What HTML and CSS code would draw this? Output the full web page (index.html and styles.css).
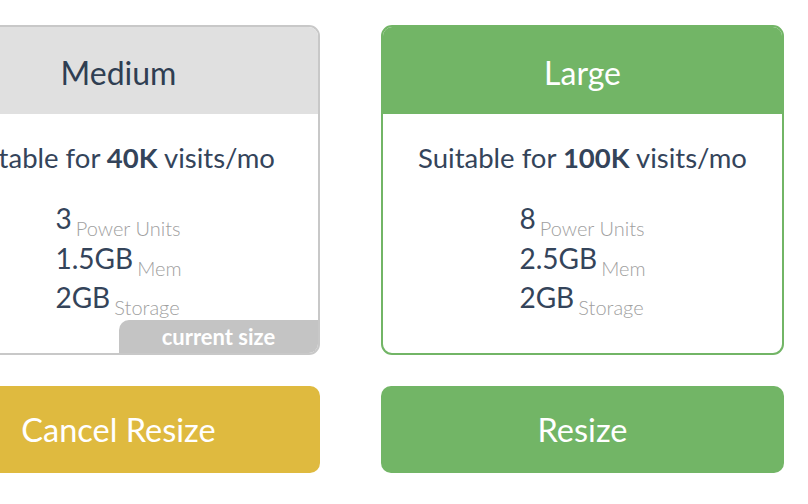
FILE: index.html
```html
<!DOCTYPE html>
<html>
<head>
<meta charset="utf-8">
<link rel="stylesheet" href="styles.css">
</head>
<body>
<div class="plans">
  <div class="col">
    <div class="card card-current">
      <div class="card-head">Medium</div>
      <div class="card-body">
        <p class="suit">Suitable for <b>40K</b> visits/mo</p>
        <div class="specs">
          <div class="spec"><span class="num">3</span> <span class="unit">Power Units</span></div>
          <div class="spec"><span class="num">1.5GB</span> <span class="unit">Mem</span></div>
          <div class="spec"><span class="num">2GB</span> <span class="unit">Storage</span></div>
        </div>
        <div class="badge">current size</div>
      </div>
    </div>
    <button class="btn btn-cancel">Cancel Resize</button>
  </div>
  <div class="col">
    <div class="card card-selected">
      <div class="card-head">Large</div>
      <div class="card-body">
        <p class="suit">Suitable for <b>100K</b> visits/mo</p>
        <div class="specs">
          <div class="spec"><span class="num">8</span> <span class="unit">Power Units</span></div>
          <div class="spec"><span class="num">2.5GB</span> <span class="unit">Mem</span></div>
          <div class="spec"><span class="num">2GB</span> <span class="unit">Storage</span></div>
        </div>
      </div>
    </div>
    <button class="btn btn-resize">Resize</button>
  </div>
</div>
</body>
</html>
```

FILE: styles.css
```css
* { box-sizing: border-box; }
html, body {
  margin: 0;
  padding: 0;
  background: #ffffff;
  overflow: hidden;
}
body {
  font-family: Lato, "Open Sans", sans-serif;
  color: #34445a;
  width: 808px;
  height: 504px;
}
.plans {
  display: flex;
  gap: 61px;
  margin-left: -83px;
  padding-top: 25px;
}
.col {
  width: 403px;
  flex: none;
  display: flex;
  flex-direction: column;
  gap: 31px;
}
.card {
  position: relative;
  height: 330px;
  border: 2px solid #c8c8c8;
  border-radius: 11px;
  overflow: hidden;
  display: flex;
  flex-direction: column;
}
.card-selected { border-color: #72b566; }
.card-head {
  height: 87px;
  display: flex;
  align-items: center;
  justify-content: center;
  font-size: 32px;
  background: #e0e0e0;
  color: #2f3e52;
  padding-top: 4px;
}
.card-selected .card-head {
  background: #72b566;
  color: #ffffff;
}
.card-body {
  flex: 1;
  display: flex;
  flex-direction: column;
  align-items: center;
  padding-top: 27px;
}
.suit {
  margin: 0;
  font-size: 27.5px;
  line-height: 33px;
  white-space: nowrap;
}
.suit b { font-weight: 700; }
.specs {
  margin-top: 25px;
}
.spec {
  height: 39.5px;
  line-height: 39.5px;
  white-space: nowrap;
}
.num {
  font-size: 28px;
}
.unit {
  font-size: 20px;
  font-weight: 300;
  color: #a0a0a0;
  vertical-align: -7px;
}
.badge {
  position: absolute;
  right: 0;
  bottom: 0;
  width: 199px;
  height: 33px;
  background: #c4c4c4;
  border-top-left-radius: 10px;
  color: #ffffff;
  font-weight: 700;
  font-size: 22px;
  line-height: 33px;
  text-align: center;
}
.btn {
  height: 87px;
  border: 0;
  border-radius: 10px;
  font-family: Lato, "Open Sans", sans-serif;
  font-size: 32.5px;
  color: #ffffff;
  padding: 0;
  cursor: pointer;
}
.btn-cancel { background: #dfba3f; }
.btn-resize { background: #72b566; }
```
